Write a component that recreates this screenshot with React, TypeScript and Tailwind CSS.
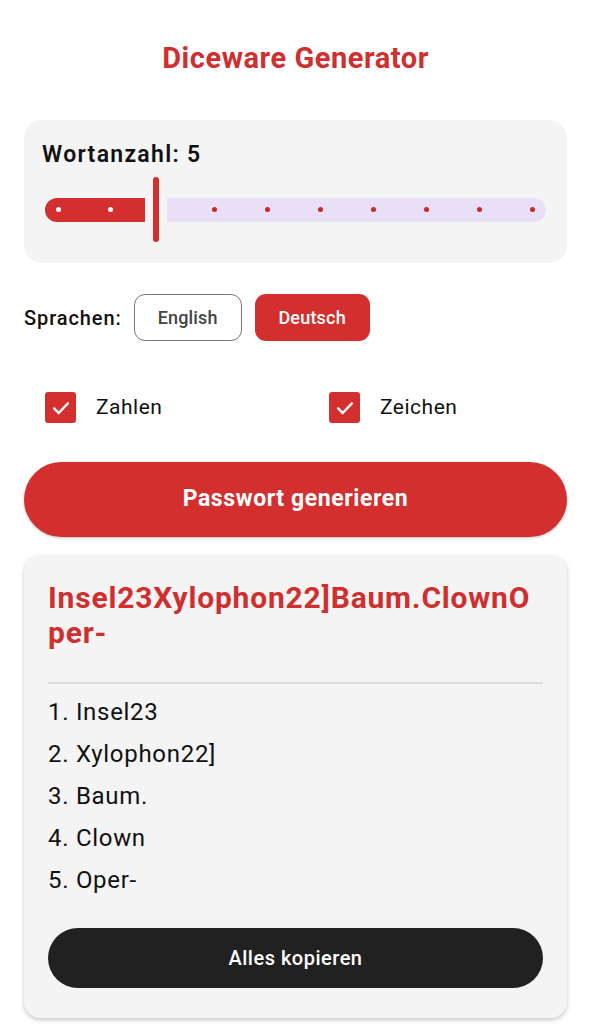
import React, { useState } from 'react';

const words = ['Insel23', 'Xylophon22]', 'Baum.', 'Clown', 'Oper-'];

function Check() {
  return (
    <svg viewBox="0 0 24 24" className="w-[22px] h-[22px]" fill="none" stroke="white" strokeWidth="2.6" strokeLinecap="round" strokeLinejoin="round">
      <path d="M4.5 12.5l5 5L19.5 7" />
    </svg>
  );
}

export default function App() {
  const [lang, setLang] = useState<'en' | 'de'>('de');
  const [zahlen, setZahlen] = useState(true);
  const [zeichen, setZeichen] = useState(true);
  const min = 3;
  const max = 12;
  const value = 5;
  const stops = Array.from({ length: max - min + 1 }, (_, i) => i + min);

  return (
    <div className="min-h-screen bg-white px-[24px] pb-[10px] font-['Roboto','Noto_Sans',sans-serif] text-[#111]">
      <h1 className="pt-[40px] h-[120px] text-center text-[29px] font-bold text-[#cf2f2f] leading-[36px] tracking-[0.55px]">
        Diceware Generator
      </h1>

      {/* Wortanzahl */}
      <div className="bg-[#f4f4f4] rounded-[18px] h-[143px] px-[18px] pt-[22px]">
        <div className="text-[23px] font-semibold leading-[26px] tracking-[1.3px]">Wortanzahl: {value}</div>
        <div className="relative mt-[9px] h-[65px] flex items-center pl-[3px] pr-[3px]">
          <div className="h-[24px] w-[100px] bg-[#d32f2f] rounded-l-full rounded-r-[3px] flex items-center gap-[47px] pl-[11px]">
            {stops.slice(0, 2).map((s) => (
              <span key={s} className="w-[5px] h-[5px] rounded-full bg-white" />
            ))}
          </div>
          <div className="mx-[8px] w-[6px] h-[65px] rounded-full bg-[#d32f2f]" />
          <div className="flex-1 h-[24px] bg-[#e9e0f7] rounded-l-[3px] rounded-r-full flex items-center justify-between pl-[45px] pr-[11px]">
            {stops.slice(3).map((s) => (
              <span key={s} className="w-[5px] h-[5px] rounded-full bg-[#c62828]" />
            ))}
          </div>
        </div>
      </div>

      {/* Sprachen */}
      <div className="mt-[31px] flex items-center h-[47px]">
        <span className="text-[20px] font-medium mr-[12px] tracking-[0.9px]">Sprachen:</span>
        <button
          onClick={() => setLang('en')}
          className={
            lang === 'en'
              ? 'w-[108px] h-[47px] rounded-[11px] bg-[#d32f2f] text-white text-[18px] font-medium tracking-[0.15px]'
              : 'w-[108px] h-[47px] rounded-[11px] border-[1.5px] border-[#777] text-[#444] text-[18px] font-medium tracking-[0.15px]'
          }
        >
          English
        </button>
        <button
          onClick={() => setLang('de')}
          className={
            lang === 'de'
              ? 'ml-[13px] w-[115px] h-[47px] rounded-[11px] bg-[#d32f2f] text-white text-[18px] font-medium tracking-[0.2px]'
              : 'ml-[13px] w-[115px] h-[47px] rounded-[11px] border-[1.5px] border-[#777] text-[#444] text-[18px] font-medium tracking-[0.2px]'
          }
        >
          Deutsch
        </button>
      </div>

      {/* Optionen */}
      <div className="mt-[51px] grid grid-cols-2 pl-[21px] h-[31px]">
        <label className="flex items-center gap-[20px] cursor-pointer" onClick={() => setZahlen(!zahlen)}>
          <span className="w-[31px] h-[31px] rounded-[3px] bg-[#d32f2f] flex items-center justify-center">
            {zahlen && <Check />}
          </span>
          <span className="text-[21px] tracking-[0.5px]">Zahlen</span>
        </label>
        <label className="flex items-center gap-[20px] pl-[23px] cursor-pointer" onClick={() => setZeichen(!zeichen)}>
          <span className="w-[31px] h-[31px] rounded-[3px] bg-[#d32f2f] flex items-center justify-center">
            {zeichen && <Check />}
          </span>
          <span className="text-[21px] tracking-[0.5px]">Zeichen</span>
        </label>
      </div>

      <button className="mt-[39px] w-full h-[75px] rounded-full bg-[#d32f2f] text-white text-[23px] font-bold tracking-[0.6px] shadow-[0_1px_3px_rgba(0,0,0,0.25)]">
        Passwort generieren
      </button>

      {/* Ergebnis */}
      <div className="mt-[18px] bg-[#f4f4f4] rounded-[16px] px-[24px] pt-[25px] pb-[30px] shadow-[0_2px_4px_rgba(0,0,0,0.22)]">
        <div className="text-[30px] font-bold text-[#cf2f2f] leading-[35px] break-all tracking-[0.8px]">
          Insel23Xylophon22]Baum.ClownOper-
        </div>
        <div className="mt-[32px] h-[2px] bg-[#dcdcdc]" />
        <ol className="mt-[15px] flex flex-col gap-[16px]">
          {words.map((w, i) => (
            <li key={w} className="text-[24px] leading-[26px] tracking-[0.7px]">
              {i + 1}. {w}
            </li>
          ))}
        </ol>
        <button className="mt-[35px] w-full h-[60px] rounded-full bg-[#212121] text-white text-[20px] font-medium tracking-[0.5px]">
          Alles kopieren
        </button>
      </div>
    </div>
  );
}
